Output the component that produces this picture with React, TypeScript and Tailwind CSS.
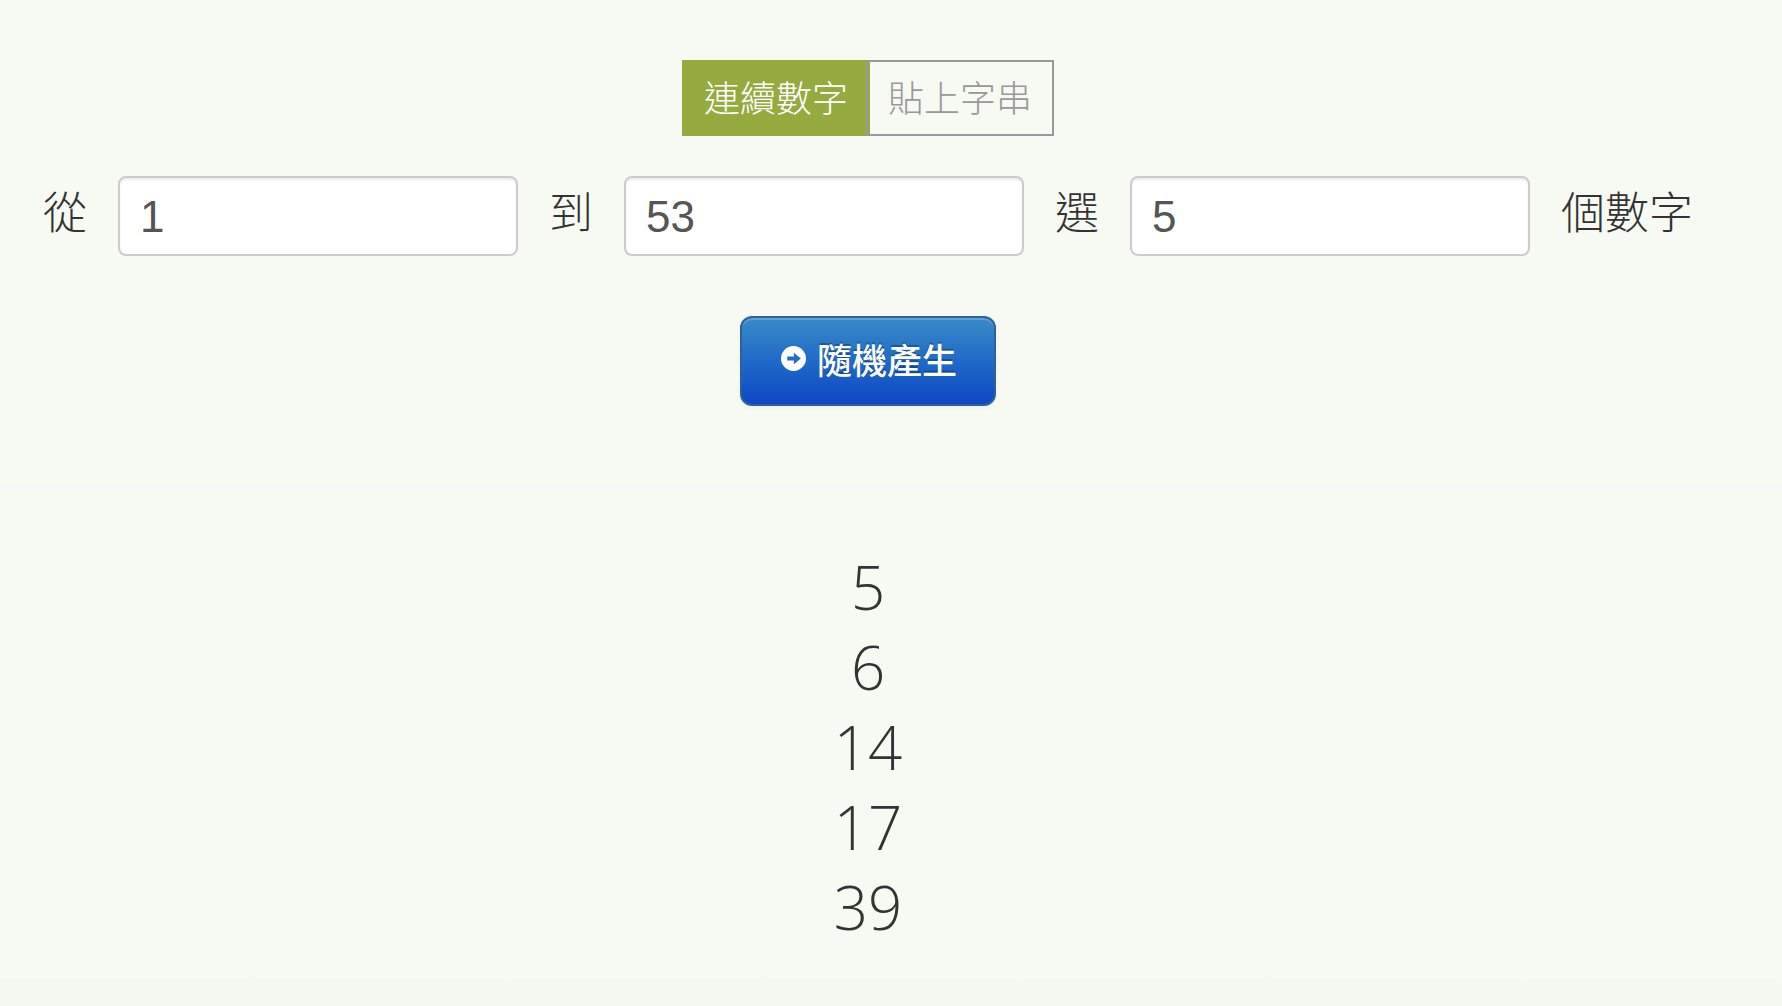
import { useState } from "react";

type Mode = "range" | "paste";

const tabBase =
  "border-2 px-5 pt-0.5 text-4xl leading-[70px] font-light h-[76px] whitespace-nowrap";

function ModeTabs({ mode, onChange }: { mode: Mode; onChange: (m: Mode) => void }) {
  const tabs: { id: Mode; label: string }[] = [
    { id: "range", label: "連續數字" },
    { id: "paste", label: "貼上字串" },
  ];
  return (
    <div className="flex justify-center">
      {tabs.map((tab, i) => (
        <button
          key={tab.id}
          type="button"
          aria-pressed={mode === tab.id}
          onClick={() => onChange(tab.id)}
          className={`${tabBase} ${i > 0 ? "-ml-1" : ""} ${
            mode === tab.id
              ? "border-[#96ab3f] bg-[#96ab3f] text-white"
              : "border-[#999999] text-[#999999]"
          }`}
        >
          {tab.label}
        </button>
      ))}
    </div>
  );
}

function NumberField({
  id,
  label,
  value,
  onChange,
}: {
  id: string;
  label: string;
  value: string;
  onChange: (v: string) => void;
}) {
  return (
    <>
      <label htmlFor={id} className="shrink-0 pb-2">
        {label}
      </label>
      <input
        id={id}
        type="text"
        inputMode="numeric"
        value={value}
        onChange={(e) => onChange(e.target.value)}
        className="h-20 w-[400px] min-w-0 rounded-lg border-2 border-[#cccccc] bg-white px-5 pt-0.5 font-['Liberation_Sans',Arial,sans-serif] text-[44px] leading-[74px] font-normal text-[#555555] shadow-[inset_0_2px_2px_rgba(0,0,0,0.075)]"
      />
    </>
  );
}

function ArrowCircleIcon() {
  return (
    <svg viewBox="0 0 24 24" className="mb-1.5 size-[25px] shrink-0" aria-hidden="true">
      <path
        fill="#ffffff"
        fillRule="evenodd"
        d="M12 0a12 12 0 1 1 0 24a12 12 0 0 1 0-24ZM6 10v4h6.4v3.6L19 12l-6.6-5.6v3.6Z"
      />
    </svg>
  );
}

function draw(from: number, to: number, count: number): number[] {
  const pool: number[] = [];
  for (let n = from; n <= to; n++) pool.push(n);
  for (let i = pool.length - 1; i > 0; i--) {
    const j = Math.floor(Math.random() * (i + 1));
    [pool[i], pool[j]] = [pool[j], pool[i]];
  }
  return pool.slice(0, count).sort((a, b) => a - b);
}

export default function App() {
  const [mode, setMode] = useState<Mode>("range");
  const [from, setFrom] = useState("1");
  const [to, setTo] = useState("53");
  const [count, setCount] = useState("5");
  const [results, setResults] = useState([5, 6, 14, 17, 39]);

  return (
    <main className="flex min-h-screen flex-col bg-[#f7faf3] font-['Open_Sans','Noto_Sans_CJK_TC',sans-serif] text-[#333333]">
      <form
        className="border-b-2 border-[#f4f5f5] pt-[60px] pr-[46px] pb-20"
        onSubmit={(e) => {
          e.preventDefault();
          setResults(draw(Number(from), Number(to), Number(count)));
        }}
      >
        <ModeTabs mode={mode} onChange={setMode} />
        <div className="mt-10 flex items-center justify-center gap-[31px] text-[44px] leading-[60px] font-light">
          <NumberField id="from" label="從" value={from} onChange={setFrom} />
          <NumberField id="to" label="到" value={to} onChange={setTo} />
          <NumberField id="count" label="選" value={count} onChange={setCount} />
          <span className="shrink-0 pb-2">個數字</span>
        </div>
        <div className="mt-[60px] flex justify-center">
          <button
            type="submit"
            className="flex h-[90px] items-center gap-[11px] rounded-xl border-2 border-[#2f6299] bg-linear-to-b from-[#3a8ac8] to-[#1145c4] pr-[37px] pl-[39px] text-[35px] leading-[48px] font-medium text-white shadow-[inset_0_2px_0_rgba(255,255,255,0.2),0_2px_4px_rgba(0,0,0,0.05)] text-shadow-[0_-2px_0_rgba(0,0,0,0.25)]"
          >
            <ArrowCircleIcon />
            <span>隨機產生</span>
          </button>
        </div>
      </form>
      <section className="flex-1 pt-[59px] pr-[46px]">
        <ul className="text-center text-6xl leading-[80px] font-light">
          {results.map((n) => (
            <li key={n}>{n}</li>
          ))}
        </ul>
      </section>
      <div className="h-7 bg-linear-to-b from-[#f6f8f2] to-[#f4f6f0]" />
    </main>
  );
}
